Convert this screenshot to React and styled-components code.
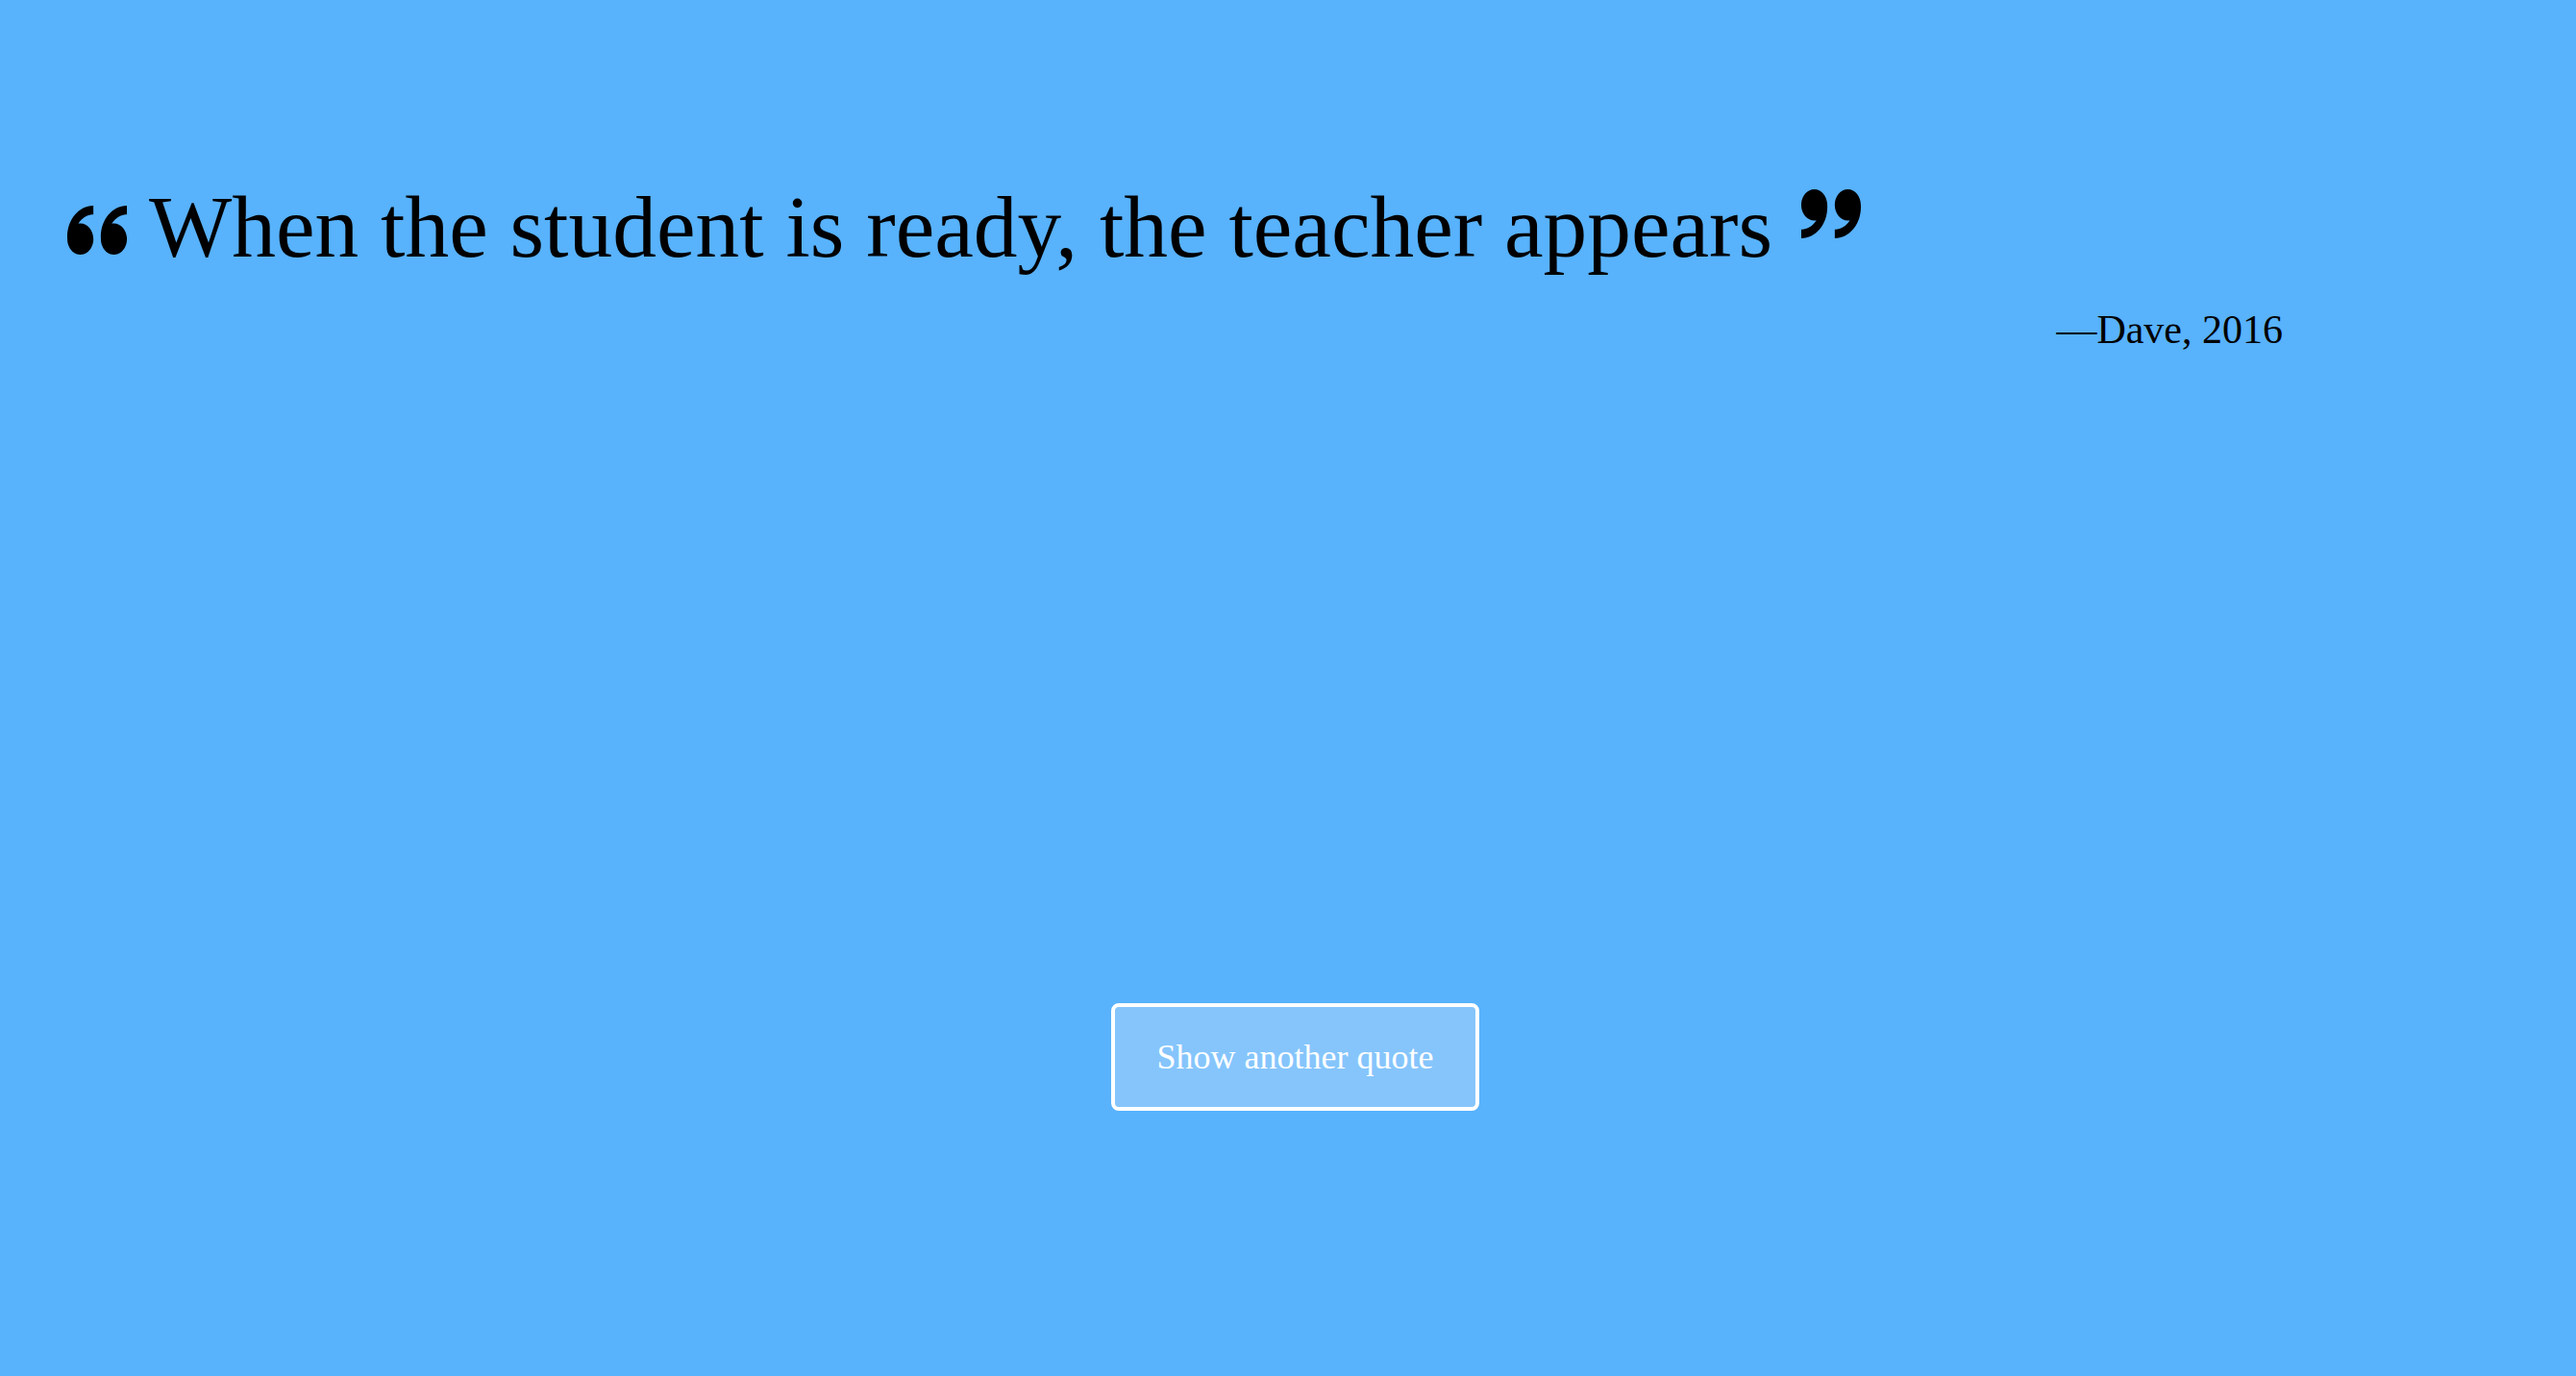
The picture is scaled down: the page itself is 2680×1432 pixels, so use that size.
import React from "react"
import styled, { createGlobalStyle } from "styled-components"

const GlobalStyle = createGlobalStyle`
  html, body {
    margin: 0;
    padding: 0;
    background: #58b2fc;
  }
`

const Page = styled.div`
  min-height: 100vh;
  background: #58b2fc;
  padding: 182px 305px 0 70px;
  box-sizing: border-box;
  font-family: "Liberation Serif", "Times New Roman", serif;
  color: #000;
`

const QuoteText = styled.h1`
  margin: 0;
  font-size: 91.4px;
  font-weight: 400;
  line-height: 1.2;
  white-space: nowrap;
`

const MarkSvg = styled.svg`
  display: inline-block;
  width: 62px;
  height: 51px;
  fill: #000;
  margin: ${props => (props.$open ? "0 23px 0 0" : "0 0 0 30px")};
  vertical-align: ${props => (props.$open ? "2px" : "19px")};
  transform: ${props => (props.$open ? "none" : "rotate(180deg)")};
`

const QUOTE_PATH =
  "M3.516 7c1.933 0 3.5 1.567 3.5 3.5s-1.567 3.5-3.5 3.5-3.5-1.567-3.5-3.5l-0.016-0.5c0-3.866 3.134-7 7-7v2c-1.336 0-2.591 0.52-3.536 1.464-0.182 0.182-0.348 0.375-0.497 0.578 0.179-0.028 0.362-0.043 0.548-0.043zM12.516 7c1.933 0 3.5 1.567 3.5 3.5s-1.567 3.5-3.5 3.5-3.5-1.567-3.5-3.5l-0.016-0.5c0-3.866 3.134-7 7-7v2c-1.336 0-2.591 0.52-3.536 1.464-0.182 0.182-0.348 0.375-0.497 0.578 0.179-0.028 0.362-0.043 0.548-0.043z"

const QuoteMark = ({ open }) => (
  <MarkSvg
    $open={open}
    viewBox="0 3 16 11"
    preserveAspectRatio="none"
    aria-hidden="true"
  >
    <path d={QUOTE_PATH} />
  </MarkSvg>
)

const Author = styled.p`
  margin: 26px 0 0;
  font-size: 42px;
  line-height: 1.2;
  text-align: right;
`

const Footer = styled.div`
  display: flex;
  justify-content: center;
  margin: 676px -305px 0 -55px;
`

const Button = styled.button`
  width: 383px;
  height: 112px;
  box-sizing: border-box;
  border: 4px solid #fff;
  border-radius: 8px;
  background: #85c5fc;
  color: #fff;
  font-family: "Liberation Serif", "Times New Roman", serif;
  font-size: 36px;
  cursor: pointer;
  padding: 0;
`

const App = () => (
  <>
    <GlobalStyle />
    <Page>
      <QuoteText>
        <QuoteMark open />
        When the student is ready, the teacher appears
        <QuoteMark />
      </QuoteText>
      <Author>—Dave, 2016</Author>
      <Footer>
        <Button>Show another quote</Button>
      </Footer>
    </Page>
  </>
)

export default App
